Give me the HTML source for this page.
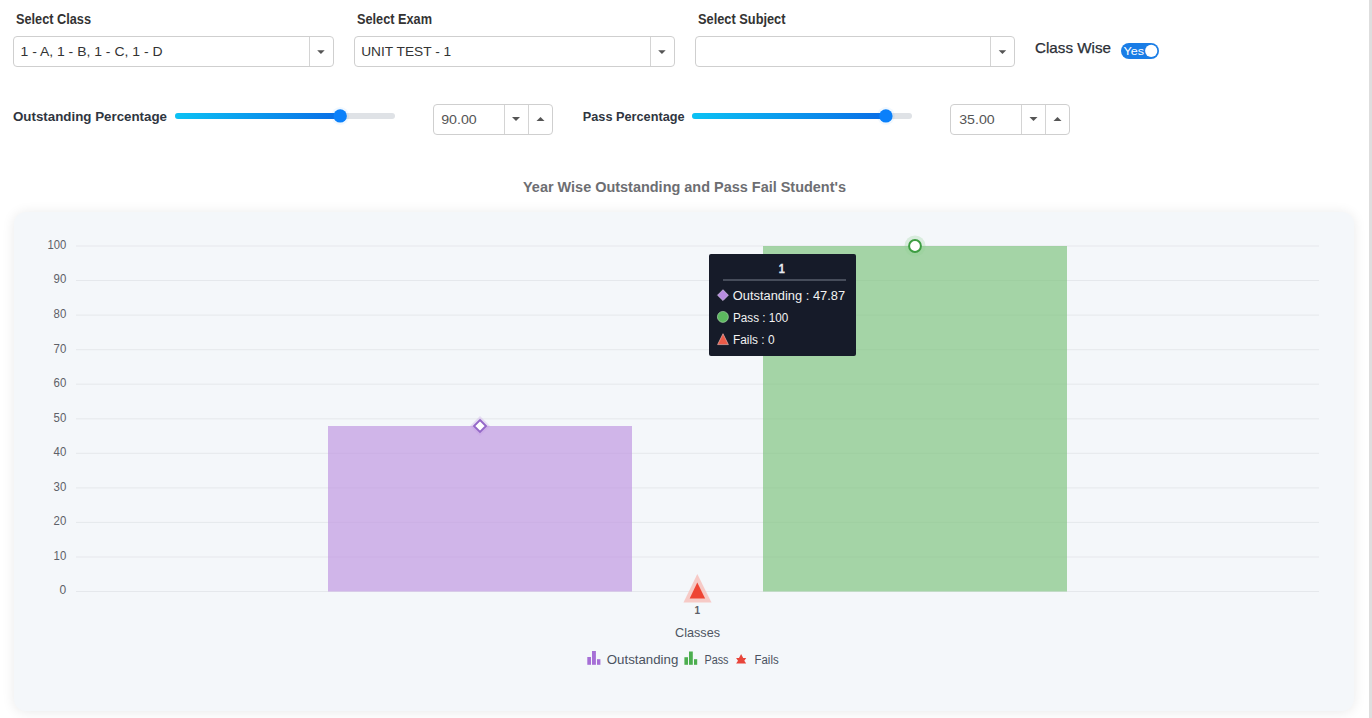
<!DOCTYPE html>
<html><head><meta charset="utf-8">
<style>
*{box-sizing:border-box;margin:0;padding:0}
html,body{width:1372px;height:718px;overflow:hidden;background:#fff;font-family:"Liberation Sans",sans-serif}
#root{position:relative;width:1372px;height:718px;overflow:hidden}
.abs{position:absolute}
.sel{position:absolute;height:31px;border:1px solid #cfcfcf;border-radius:4px;background:#fff}
.sel .div{position:absolute;right:23px;top:0;bottom:0;width:1px;background:#d4d4d4}
.num{position:absolute;height:31px;width:120px;border:1px solid #cfcfcf;border-radius:4px;background:#fff}
.num .d1{position:absolute;left:70px;top:0;bottom:0;width:1px;background:#d4d4d4}
.num .d2{position:absolute;left:94px;top:0;bottom:0;width:1px;background:#d4d4d4}
svg{position:absolute;left:0;top:0}
</style></head>
<body><div id="root">

<div class="sel" style="left:13px;top:36px;width:321px"><div class="div"></div></div>
<div class="sel" style="left:354px;top:36px;width:321px"><div class="div"></div></div>
<div class="sel" style="left:695px;top:36px;width:320px"><div class="div"></div></div>
<div class="num" style="left:433px;top:104px"><div class="d1"></div><div class="d2"></div></div>
<div class="num" style="left:950px;top:104px"><div class="d1"></div><div class="d2"></div></div>

<!-- card -->
<div class="abs" style="left:14px;top:212px;width:1340px;height:499px;border-radius:12px;background:#f4f7fa;box-shadow:0 1px 13px rgba(0,0,0,.09)"></div>

<!-- tooltip box -->
<div class="abs" style="left:709px;top:254px;width:147px;height:102px;background:#161b29;border-radius:2px;z-index:2"></div>

<svg width="1372" height="718" font-family="Liberation Sans, sans-serif" style="z-index:1">
  <!-- top form text -->
  <g font-weight="bold" font-size="14" fill="#333">
    <text x="16" y="23.7" textLength="75" lengthAdjust="spacingAndGlyphs">Select Class</text>
    <text x="357" y="23.7" textLength="75" lengthAdjust="spacingAndGlyphs">Select Exam</text>
    <text x="698" y="23.7" textLength="87.5" lengthAdjust="spacingAndGlyphs">Select Subject</text>
  </g>
  <g font-size="13" fill="#333">
    <text x="20.5" y="55.8" textLength="142" lengthAdjust="spacingAndGlyphs">1 - A, 1 - B, 1 - C, 1 - D</text>
    <text x="361.2" y="55.8" textLength="90" lengthAdjust="spacingAndGlyphs">UNIT TEST - 1</text>
  </g>
  <g fill="#555">
    <path d="M317.2 50.3 h7.5 l-3.75 3.8 z"/>
    <path d="M658.2 50.3 h7.5 l-3.75 3.8 z"/>
    <path d="M998.7 50.3 h7.5 l-3.75 3.8 z"/>
    <path d="M512 117 h8 l-4 4 z"/>
    <path d="M536.5 121 h8 l-4 -4 z"/>
    <path d="M1029.5 117 h8 l-4 4 z"/>
    <path d="M1053.5 121 h8 l-4 -4 z"/>
  </g>
  <text x="1035" y="52.8" font-size="14.3" fill="#2b2f36" stroke="#2b2f36" stroke-width="0.25" textLength="76" lengthAdjust="spacingAndGlyphs">Class Wise</text>
  <rect x="1121" y="43" width="38" height="16" rx="8" fill="#1a7de6"/>
  <circle cx="1151.2" cy="50.9" r="6.1" fill="#fff"/>
  <text x="1123.6" y="54.6" font-size="11.5" fill="#fff" textLength="20.5" lengthAdjust="spacingAndGlyphs">Yes</text>

  <g font-weight="bold" font-size="13.5" fill="#2f3540">
    <text x="13" y="120.7" textLength="154" lengthAdjust="spacingAndGlyphs">Outstanding Percentage</text>
    <text x="582.8" y="120.7" textLength="101.8" lengthAdjust="spacingAndGlyphs">Pass Percentage</text>
  </g>
  <defs>
    <linearGradient id="g1" x1="0" x2="1"><stop offset="0" stop-color="#0cc2f4"/><stop offset="1" stop-color="#0a6de6"/></linearGradient>
  </defs>
  <rect x="175" y="113" width="220" height="6" rx="3" fill="#dfe2e6"/>
  <rect x="175" y="113" width="166" height="6" rx="3" fill="url(#g1)"/>
  <circle cx="340.2" cy="115.9" r="9" fill="#0a80fa" opacity="0.06"/>
  <circle cx="340.2" cy="115.9" r="6.7" fill="#0a80fa"/>
  <rect x="692" y="113" width="220" height="6" rx="3" fill="#dfe2e6"/>
  <rect x="692" y="113" width="194" height="6" rx="3" fill="url(#g1)"/>
  <circle cx="885.9" cy="115.9" r="9" fill="#0a80fa" opacity="0.06"/>
  <circle cx="885.9" cy="115.9" r="6.7" fill="#0a80fa"/>

  <g font-size="13.3" fill="#555">
    <text x="441.2" y="123.8" textLength="35.5" lengthAdjust="spacingAndGlyphs">90.00</text>
    <text x="959.2" y="123.8" textLength="35.5" lengthAdjust="spacingAndGlyphs">35.00</text>
  </g>

  <text x="523" y="191.8" font-size="14.5" font-weight="bold" fill="#6d6e72" textLength="323" lengthAdjust="spacingAndGlyphs">Year Wise Outstanding and Pass Fail Student's</text>

  <!-- grid -->
  <g fill="#e5e8ec">
    <rect x="76" y="245.5" width="1243" height="1"/>
    <rect x="76" y="280" width="1243" height="1"/>
    <rect x="76" y="314.6" width="1243" height="1"/>
    <rect x="76" y="349.2" width="1243" height="1"/>
    <rect x="76" y="383.7" width="1243" height="1"/>
    <rect x="76" y="418.3" width="1243" height="1"/>
    <rect x="76" y="452.8" width="1243" height="1"/>
    <rect x="76" y="487.4" width="1243" height="1"/>
    <rect x="76" y="521.9" width="1243" height="1"/>
    <rect x="76" y="556.5" width="1243" height="1"/>
    <rect x="76" y="591" width="1243" height="1"/>
  </g>
  <g font-size="12.3" fill="#5e6168">
    <text x="47.5" y="248.8" textLength="18.8" lengthAdjust="spacingAndGlyphs">100</text>
    <text x="53.6" y="283.4" textLength="12.7" lengthAdjust="spacingAndGlyphs">90</text>
    <text x="53.6" y="317.9" textLength="12.7" lengthAdjust="spacingAndGlyphs">80</text>
    <text x="53.6" y="352.5" textLength="12.7" lengthAdjust="spacingAndGlyphs">70</text>
    <text x="53.6" y="387" textLength="12.7" lengthAdjust="spacingAndGlyphs">60</text>
    <text x="53.6" y="421.6" textLength="12.7" lengthAdjust="spacingAndGlyphs">50</text>
    <text x="53.6" y="456.1" textLength="12.7" lengthAdjust="spacingAndGlyphs">40</text>
    <text x="53.6" y="490.7" textLength="12.7" lengthAdjust="spacingAndGlyphs">30</text>
    <text x="53.6" y="525.2" textLength="12.7" lengthAdjust="spacingAndGlyphs">20</text>
    <text x="53.6" y="559.8" textLength="12.7" lengthAdjust="spacingAndGlyphs">10</text>
    <text x="59.6" y="593.8" textLength="6.7" lengthAdjust="spacingAndGlyphs">0</text>
  </g>
  <rect x="328" y="426" width="304" height="165.5" fill="#c199e1" fill-opacity="0.7"/>
  <rect x="763" y="246" width="304" height="345.5" fill="#81c582" fill-opacity="0.7"/>
  <!-- markers -->
  <path d="M480 416 L490 426 L480 436 L470 426 Z" fill="#c39ae6" opacity="0.3"/>
  <path d="M480 420 L486 426 L480 432 L474 426 Z" fill="#fff" stroke="#9468c8" stroke-width="1.9"/>
  <circle cx="915" cy="246" r="10.5" fill="#8fcf92" opacity="0.28"/>
  <circle cx="915" cy="246" r="5.9" fill="#fff" stroke="#3d9d42" stroke-width="2"/>
  <path d="M697.3 574 L711.5 602.6 L683.5 602.6 Z" fill="#f6c4c0" opacity="0.9"/>
  <path d="M697.3 582.6 L705.1 598.6 L689.7 598.6 Z" fill="#ee4433"/>
  <text x="694.6" y="613.7" font-size="11.5" fill="#5d6068" font-weight="bold" textLength="5.6" lengthAdjust="spacingAndGlyphs">1</text>
  <text x="675" y="637" font-size="13" fill="#4e5561" textLength="45" lengthAdjust="spacingAndGlyphs">Classes</text>
  <!-- legend -->
  <g fill="#a66fd6">
    <rect x="587.3" y="657" width="3.7" height="7.8"/><rect x="592" y="651" width="3.9" height="13.8"/><rect x="597" y="659.2" width="3.4" height="5.6"/>
  </g>
  <text x="606.8" y="664" font-size="12.8" fill="#4a5260" textLength="71.5" lengthAdjust="spacingAndGlyphs">Outstanding</text>
  <g fill="#4cae4f">
    <rect x="684.4" y="657.2" width="3.6" height="7.6"/><rect x="689" y="651.5" width="3.8" height="13.3"/><rect x="694" y="659.2" width="3.2" height="5.6"/>
  </g>
  <text x="704.5" y="663.6" font-size="12" fill="#4a5260" textLength="24" lengthAdjust="spacingAndGlyphs">Pass</text>
  <path d="M741.1 654 L743.2 658 L746.2 658 L744.3 660.8 L746.2 663.6 L736.1 663.6 L738 660.8 L736.1 658 L739 658 Z" fill="#e8453a"/>
  <text x="754.6" y="663.6" font-size="12" fill="#4a5260" textLength="24" lengthAdjust="spacingAndGlyphs">Fails</text>
</svg>

<svg width="1372" height="718" font-family="Liberation Sans, sans-serif" style="z-index:3">
  <text x="778.8" y="272.6" font-size="13" font-weight="bold" fill="#e8eaf0" stroke="#e8eaf0" stroke-width="0.3" textLength="6" lengthAdjust="spacingAndGlyphs">1</text>
  <rect x="723" y="279" width="123" height="2" fill="#464c5a"/>
  <path d="M723 289.7 L728.4 295.2 L723 300.6 L717.5 295.2 Z" fill="#b88de0" stroke="#e6d8f5" stroke-width="0.6"/>
  <circle cx="722.9" cy="316.9" r="5.5" fill="#5cb85f" stroke="#b5e0b6" stroke-width="0.6"/>
  <path d="M723 333.7 L728.4 344.6 L717.6 344.6 Z" fill="#ec5a48" stroke="#f5c5bf" stroke-width="0.6"/>
  <g font-size="12.3" fill="#f2f2f2">
    <text x="732.8" y="299.7" textLength="112.3" lengthAdjust="spacingAndGlyphs">Outstanding : 47.87</text>
    <text x="733" y="321.9" textLength="55.3" lengthAdjust="spacingAndGlyphs">Pass : 100</text>
    <text x="733" y="344" textLength="41.5" lengthAdjust="spacingAndGlyphs">Fails : 0</text>
  </g>
</svg>

<div class="abs" style="left:1369px;top:0;width:3px;height:718px;background:#dedede;z-index:4"></div>
</div></body></html>
